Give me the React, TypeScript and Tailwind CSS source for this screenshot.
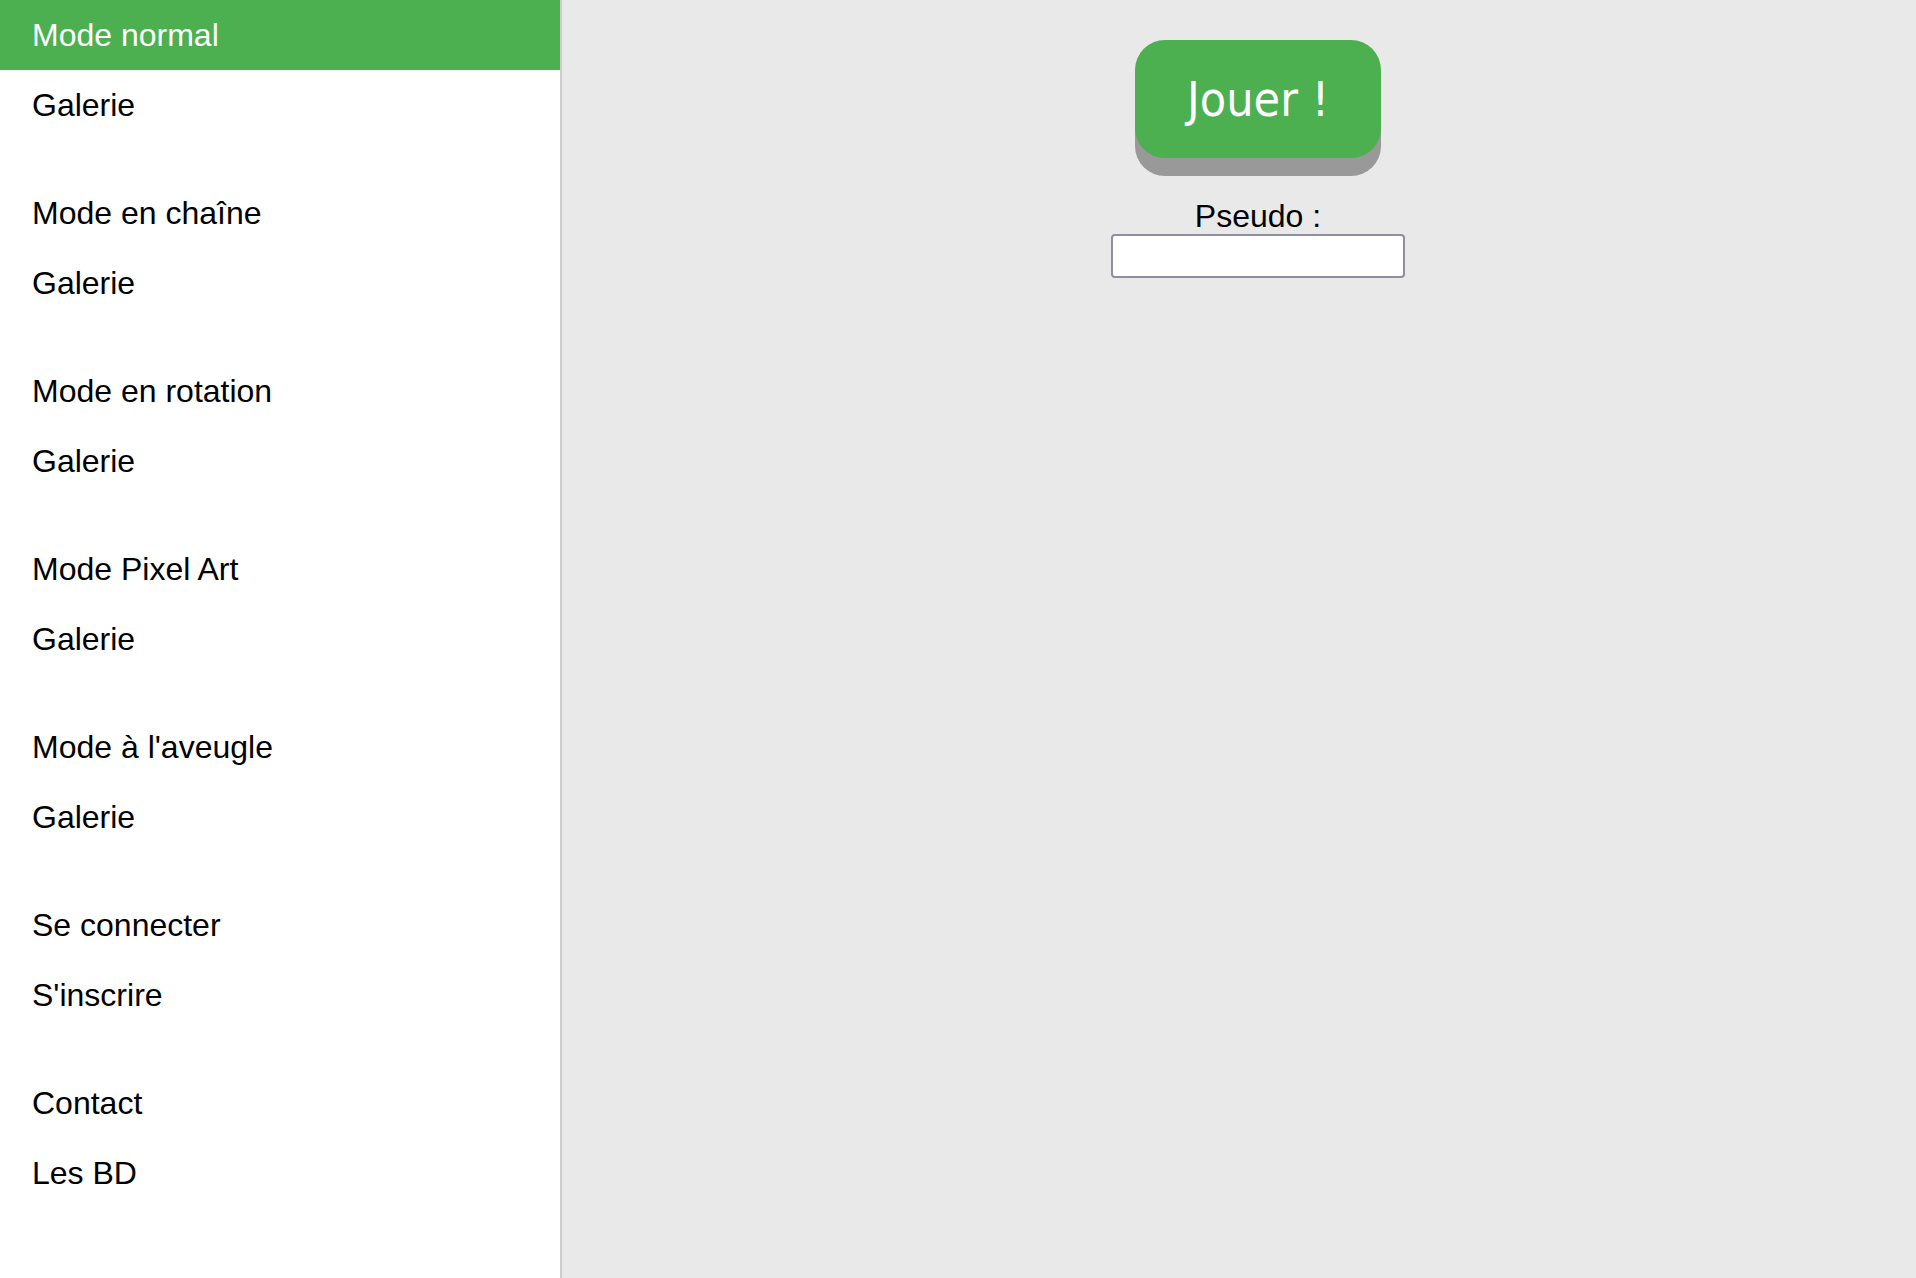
const groups = [
  ['Mode normal', 'Galerie'],
  ['Mode en chaîne', 'Galerie'],
  ['Mode en rotation', 'Galerie'],
  ['Mode Pixel Art', 'Galerie'],
  ["Mode à l'aveugle", 'Galerie'],
  ['Se connecter', "S'inscrire"],
  ['Contact', 'Les BD'],
]

export default function App() {
  return (
    <div className="flex min-h-screen font-['Liberation_Sans',Arial,sans-serif] text-black">
      <nav className="w-[562px] shrink-0 border-r-2 border-[#cccccc] bg-white">
        {groups.map((group, gi) => (
          <ul key={gi} className="mb-[38px]">
            {group.map((label, i) => {
              const active = gi === 0 && i === 0
              return (
                <li
                  key={label + i}
                  className={
                    active
                      ? 'flex h-[70px] items-center bg-[#4caf50] px-8 text-[32px] text-white'
                      : 'flex h-[70px] items-center px-8 text-[32px] text-black'
                  }
                >
                  {label}
                </li>
              )
            })}
          </ul>
        ))}
      </nav>

      <main className="flex flex-1 flex-col items-center bg-[#e9e9e9] pt-10 pl-[38px]">
        <button className="h-[118px] w-[246px] rounded-[30px] bg-[#4caf50] font-['DejaVu_Sans_Condensed','DejaVu_Sans',sans-serif] text-[48px] text-white shadow-[0_18px_0_#999999]">
          Jouer !
        </button>
        <label className="mt-[40px] text-[32px] leading-[36px]">Pseudo :</label>
        <input
          type="text"
          className="h-[44px] w-[294px] rounded-[4px] border-2 border-[#8f8f9d] bg-white px-1 text-[20px] outline-none"
        />
      </main>
    </div>
  )
}
